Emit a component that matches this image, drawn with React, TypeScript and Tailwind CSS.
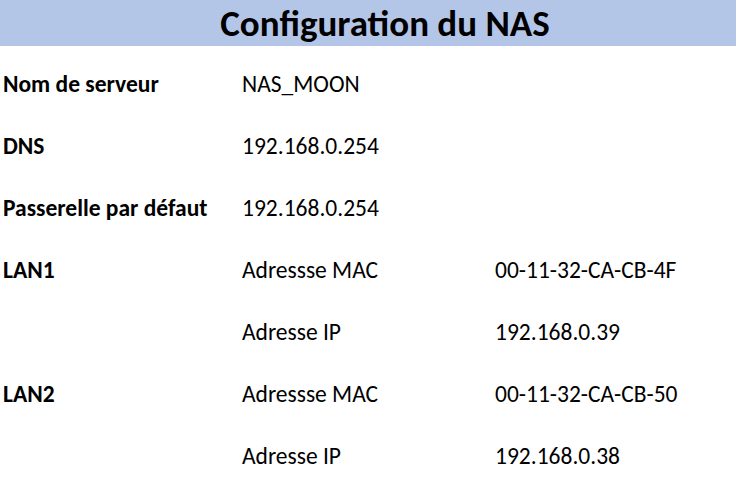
import React from "react";

const rows: [string, string, string][] = [
  ["Nom de serveur", "NAS_MOON", ""],
  ["DNS", "192.168.0.254", ""],
  ["Passerelle par défaut", "192.168.0.254", ""],
  ["LAN1", "Adressse MAC", "00-11-32-CA-CB-4F"],
  ["", "Adresse IP", "192.168.0.39"],
  ["LAN2", "Adressse MAC", "00-11-32-CA-CB-50"],
  ["", "Adresse IP", "192.168.0.38"],
];

export default function App() {
  return (
    <div
      className="w-[736px] h-[483px] bg-white text-black overflow-hidden"
      style={{ fontFamily: "Carlito, Lato, 'Open Sans', sans-serif" }}
    >
      <div className="h-[46px] bg-[#b4c6e7] flex items-center justify-center pl-[34px]">
        <span className="text-[37px] font-bold leading-none">Configuration du NAS</span>
      </div>
      <div className="pt-[8px]">
        {rows.map((r, i) => (
          <div key={i} className="h-[62px] flex items-center text-[23.5px]">
            <div className="w-[242px] pl-[3px] font-bold">{r[0]}</div>
            <div className="w-[253px]">{r[1]}</div>
            <div>{r[2]}</div>
          </div>
        ))}
      </div>
    </div>
  );
}
